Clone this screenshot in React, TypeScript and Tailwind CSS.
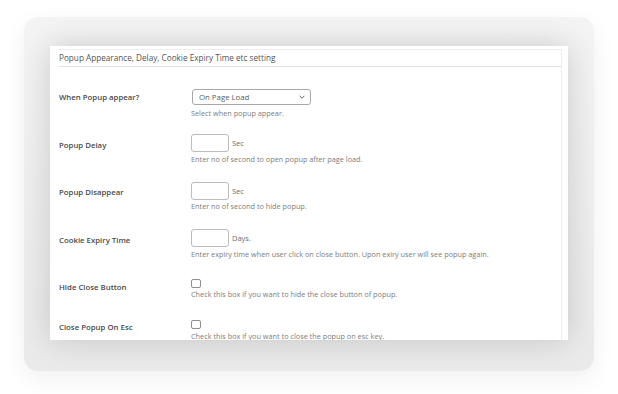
import { ReactNode } from "react";

const font = { fontFamily: '"Open Sans", "Noto Sans", sans-serif' };

type RowProps = {
  label: string;
  labelTop: string;
  helpTop: string;
  rowTop: string;
  help: string;
  children: ReactNode;
};

const Row = ({ label, labelTop, helpTop, rowTop, help, children }: RowProps) => (
  <div className={`flex ${rowTop}`}>
    <div
      className={`w-[132px] shrink-0 text-[7.8px] leading-[10px] font-semibold text-[#4a4a4a] ${labelTop}`}
    >
      {label}
    </div>
    <div className="flex flex-col">
      {children}
      <p className={`text-[7.3px] leading-[10px] whitespace-nowrap text-[#7d7d7d] ${helpTop}`}>
        {help}
      </p>
    </div>
  </div>
);

const NumberField = ({ unit }: { unit: string }) => (
  <div className="flex items-center gap-[3px]">
    <div className="w-[38px] h-[18px] rounded-[3px] border border-[#bcbcbc] bg-white" />
    <span className="text-[7.5px] leading-[10px] text-[#6e6e6e]">{unit}</span>
  </div>
);

const CheckBox = () => (
  <div className="w-[10px] h-[9px] rounded-[2px] border border-[#8f8f8f] bg-white" />
);

export default function App() {
  return (
    <div className="w-[618px] h-[394px] bg-white pl-[24px] pt-[17px]" style={font}>
      <div className="w-[570px] h-[354px] rounded-[14px] bg-gradient-to-b from-[#f4f4f4] to-[#eaeaea] shadow-[0_8px_24px_rgba(0,0,0,0.06)] pl-[26px] pt-[29px]">
        <div className="w-[518px] h-[294px] bg-white overflow-hidden pl-[9px] pt-[3px] pr-[6px] shadow-[0_0_30px_rgba(0,0,0,0.17)]">
          <div className="h-full border-t border-r border-[#ececec]">
            <div className="h-[17px] border-b border-[#e2e2e2] flex items-center">
              <h2 className="text-[8.2px] leading-[10px] text-[#555]">
                Popup Appearance, Delay, Cookie Expiry Time etc setting
              </h2>
            </div>

            <Row
              rowTop="mt-[22px]"
              label="When Popup appear?"
              labelTop="mt-[3px]"
              helpTop="mt-[3px]"
              help="Select when popup appear."
            >
              <div className="ml-[1px] w-[119px] h-[16px] rounded-[3px] border border-[#a8a8a8] bg-white flex items-center justify-between pl-[6px] pr-[5px]">
                <span className="text-[7.8px] leading-[10px] text-[#5a5a5a]">On Page Load</span>
                <svg width="6" height="4" viewBox="0 0 6 4" fill="none">
                  <path d="M0.6 0.8 L3 3.2 L5.4 0.8" stroke="#555" strokeWidth="0.9" />
                </svg>
              </div>
            </Row>

            <Row
              rowTop="mt-[16px]"
              label="Popup Delay"
              labelTop="mt-[6px]"
              helpTop="mt-[2px]"
              help="Enter no of second to open popup after page load."
            >
              <NumberField unit="Sec" />
            </Row>

            <Row
              rowTop="mt-[18px]"
              label="Popup Disappear"
              labelTop="mt-[5px]"
              helpTop="mt-[1px]"
              help="Enter no of second to hide popup."
            >
              <NumberField unit="Sec" />
            </Row>

            <Row
              rowTop="mt-[18px]"
              label="Cookie Expiry Time"
              labelTop="mt-[6px]"
              helpTop="mt-[2px]"
              help="Enter expiry time when user click on close button. Upon exiry user will see popup again."
            >
              <NumberField unit="Days." />
            </Row>

            <Row
              rowTop="mt-[20px]"
              label="Hide Close Button"
              labelTop="mt-[3px]"
              helpTop="mt-[1px]"
              help="Check this box if you want to hide the close button of popup."
            >
              <CheckBox />
            </Row>

            <Row
              rowTop="mt-[21px]"
              label="Close Popup On Esc"
              labelTop="mt-[2px]"
              helpTop="mt-[2px]"
              help="Check this box if you want to close the popup on esc key."
            >
              <CheckBox />
            </Row>
          </div>
        </div>
      </div>
    </div>
  );
}
